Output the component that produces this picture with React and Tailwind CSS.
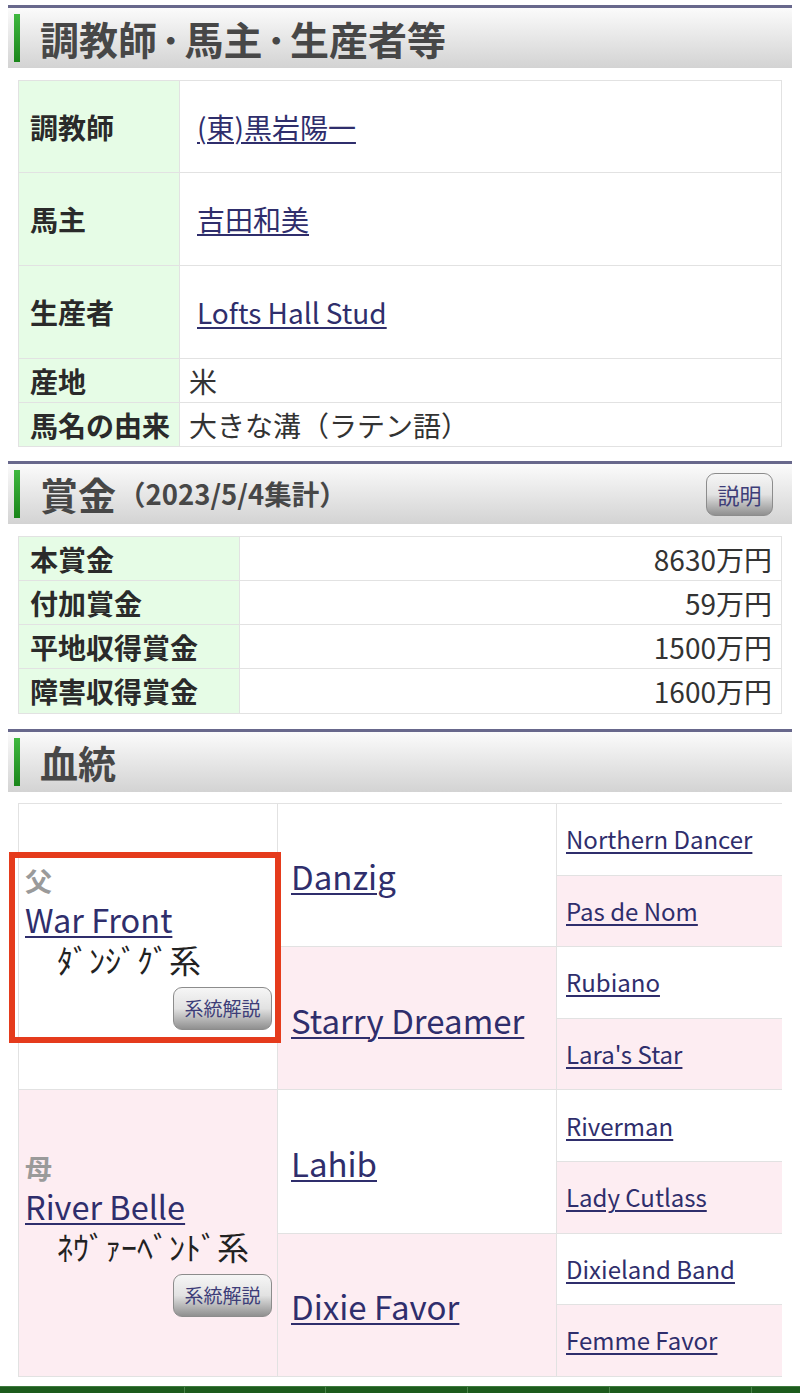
import React from "react";

const FONT = { fontFamily: '"Noto Sans CJK JP", "Noto Sans", sans-serif' };

function Header({ children, right }) {
  return (
    <div className="mx-2 border-t-[3px] border-[#68688c] h-[63px] bg-linear-to-b from-[#fbfbfb] to-[#d3d3d3] flex items-center">
      <div className="ml-[6px] w-[6px] h-[48px] bg-linear-to-b from-[#3fb83f] to-[#1a861a]" />
      <div className="ml-[20px] flex-1 flex items-center text-[#474747] font-bold">{children}</div>
      {right}
    </div>
  );
}

function Btn({ children, className = "" }) {
  return (
    <div
      className={
        "rounded-[9px] border border-[#8c8c8c] bg-linear-to-b from-[#f6f6f6] via-[#e2e2e2] to-[#909090] text-[#3d3d78] flex items-center justify-center " +
        className
      }
    >
      {children}
    </div>
  );
}

const L = "text-[#2f2e6c] underline underline-offset-[3px] decoration-[1.5px]";

function InfoRow({ label, children, h, pl }) {
  return (
    <div className="flex border-b border-[#e2e2e2] last:border-b-0" style={{ height: h }}>
      <div className="w-[161px] bg-[#e6fce6] border-r border-[#e2e2e2] flex items-center pl-[11px] text-[28px] font-bold text-[#2a2a2a]">
        {label}
      </div>
      <div className="flex-1 flex items-center text-[28px] text-[#333]" style={{ paddingLeft: pl }}>
        {children}
      </div>
    </div>
  );
}

function PrizeRow({ label, value }) {
  return (
    <div className="flex h-[44px] border-b border-[#e2e2e2] last:border-b-0">
      <div className="w-[221px] bg-[#e6fce6] border-r border-[#e2e2e2] flex items-center pl-[11px] text-[28px] font-bold text-[#2a2a2a]">
        {label}
      </div>
      <div className="flex-1 flex items-center justify-end pr-[9px] text-[28px] text-[#333]">{value}</div>
    </div>
  );
}

const WHITE = "bg-white";
const PINK = "bg-[#fdedf2]";

function Dot() {
  return <span className="mx-[4px]">･</span>;
}

export default function App() {
  const gen3 = [
    "Northern Dancer",
    "Pas de Nom",
    "Rubiano",
    "Lara's Star",
    "Riverman",
    "Lady Cutlass",
    "Dixieland Band",
    "Femme Favor",
  ];
  const gen2 = ["Danzig", "Starry Dreamer", "Lahib", "Dixie Favor"];
  return (
    <div className="w-[800px] h-[1393px] bg-white overflow-hidden pt-[5px]" style={FONT}>
      <Header>
        <span className="text-[39px] leading-none">
          調教師<Dot />馬主<Dot />生産者等
        </span>
      </Header>

      <div className="mx-[18px] mt-[12px] border border-[#e2e2e2]">
        <InfoRow label="調教師" h={92} pl={17}>
          <a className={L}>(東)黒岩陽一</a>
        </InfoRow>
        <InfoRow label="馬主" h={93} pl={17}>
          <a className={L}>吉田和美</a>
        </InfoRow>
        <InfoRow label="生産者" h={93} pl={17}>
          <a className={L}>Lofts Hall Stud</a>
        </InfoRow>
        <InfoRow label="産地" h={44} pl={9}>
          米
        </InfoRow>
        <InfoRow label="馬名の由来" h={43} pl={9}>
          大きな溝（ラテン語）
        </InfoRow>
      </div>

      <div className="mt-[14px]">
        <Header
          right={
            <Btn className="w-[67px] h-[43px] mr-[19px] text-[22px]">説明</Btn>
          }
        >
          <span className="text-[38px] leading-none">賞金</span>
          <span className="text-[27.5px] leading-none ml-[2px]">（2023/5/4集計）</span>
        </Header>
      </div>

      <div className="mx-[18px] mt-[12px] border border-[#e2e2e2]">
        <PrizeRow label="本賞金" value="8630万円" />
        <PrizeRow label="付加賞金" value="59万円" />
        <PrizeRow label="平地収得賞金" value="1500万円" />
        <PrizeRow label="障害収得賞金" value="1600万円" />
      </div>

      <div className="mt-[15px]">
        <Header>
          <span className="text-[38px] leading-none">血統</span>
        </Header>
      </div>

      <div className="relative mx-[18px] mt-[11px]">
        <div className="grid grid-cols-[258px_278px_225px] grid-rows-[repeat(8,70.6px)] gap-px bg-[#e2e2e2] p-px">
          <div className={"row-span-4 col-start-1 row-start-1 flex flex-col justify-center pl-[6px] pr-[5px] " + WHITE}>
            <div className="text-[27px] font-bold text-[#9a9a9a] leading-[36px]">父</div>
            <a className={L + " text-[32.5px] leading-[40px]"}>War Front</a>
            <div className="text-[32px] leading-[38px] text-[#222] mt-[1px]">　ﾀﾞﾝｼﾞｸﾞ系</div>
            <div className="flex justify-end mt-[9px]">
              <Btn className="w-[99px] h-[43px] text-[19px]">系統解説</Btn>
            </div>
          </div>
          <div className={"row-span-4 col-start-1 row-start-5 flex flex-col justify-center pl-[6px] pr-[5px] " + PINK}>
            <div className="text-[27px] font-bold text-[#9a9a9a] leading-[36px]">母</div>
            <a className={L + " text-[32.5px] leading-[40px]"}>River Belle</a>
            <div className="text-[32px] leading-[38px] text-[#222] mt-[1px]">　ﾈｳﾞｧｰﾍﾞﾝﾄﾞ系</div>
            <div className="flex justify-end mt-[9px]">
              <Btn className="w-[99px] h-[43px] text-[19px]">系統解説</Btn>
            </div>
          </div>
          {gen2.map((n, i) => (
            <div
              key={n}
              className={
                "row-span-2 col-start-2 flex items-center pl-[13px] pt-[4px] " + (i % 2 ? PINK : WHITE)
              }
              style={{ gridRowStart: i * 2 + 1 }}
            >
              <a className={L + " text-[33px]"}>{n}</a>
            </div>
          ))}
          {gen3.map((n, i) => (
            <div
              key={n}
              className={"col-start-3 flex items-center pl-[9px] " + (i % 2 ? PINK : WHITE)}
              style={{ gridRowStart: i + 1 }}
            >
              <a className={L + " text-[24px]"}>{n}</a>
            </div>
          ))}
        </div>
        <div className="absolute left-[-9px] top-[49px] w-[272px] h-[191px] border-[6px] border-[#e53b1c] pointer-events-none" />
      </div>

      <div className="mt-[9px] h-[8px] bg-[#1d5b1d] border-t border-[#3e7a3e] flex">
        <div className="w-[185px] border-r border-[#4a844a]" />
        <div className="w-[141px] border-r border-[#4a844a]" />
        <div className="w-[142px] border-r border-[#4a844a]" />
        <div className="w-[142px] border-r border-[#4a844a]" />
        <div className="w-[142px] border-r border-[#4a844a]" />
        <div className="flex-1" />
      </div>
    </div>
  );
}
